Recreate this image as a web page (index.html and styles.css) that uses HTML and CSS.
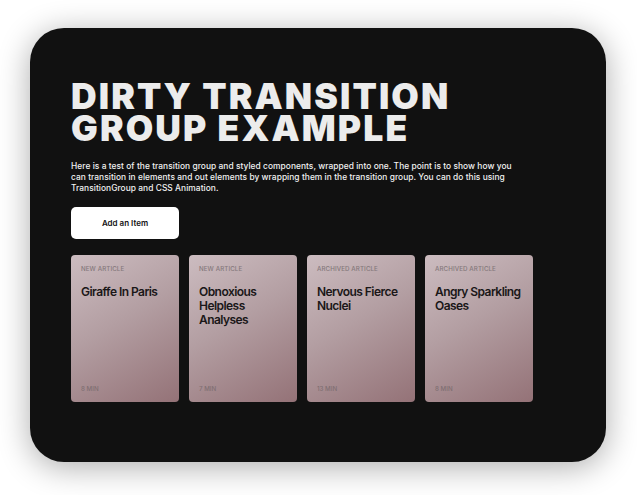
FILE: index.html
```html
<!DOCTYPE html>
<html>
<head>
<meta charset="utf-8">
<link rel="stylesheet" href="styles.css">
</head>
<body>
<main class="panel">
  <h1 class="title">DIRTY TRANSITION<br>GROUP EXAMPLE</h1>
  <p class="intro">Here is a test of the transition group and styled components, wrapped into one. The point is to show how you can transition in elements and out elements by wrapping them in the transition group. You can do this using TransitionGroup and CSS Animation.</p>
  <button class="add-btn">Add an Item</button>
  <section class="cards">
    <article class="card">
      <div class="card-label">New Article</div>
      <h2 class="card-title">Giraffe In Paris</h2>
      <div class="card-time">8 min</div>
    </article>
    <article class="card">
      <div class="card-label">New Article</div>
      <h2 class="card-title">Obnoxious Helpless Analyses</h2>
      <div class="card-time">7 min</div>
    </article>
    <article class="card">
      <div class="card-label">Archived Article</div>
      <h2 class="card-title">Nervous Fierce Nuclei</h2>
      <div class="card-time">13 min</div>
    </article>
    <article class="card">
      <div class="card-label">Archived Article</div>
      <h2 class="card-title">Angry Sparkling Oases</h2>
      <div class="card-time">8 min</div>
    </article>
  </section>
</main>
</body>
</html>
```
FILE: styles.css
```css
html, body {
  margin: 0;
  padding: 0;
  background: #ffffff;
}
body {
  padding: 28px 31px 33px 30px;
  font-family: Inter, "Liberation Sans", sans-serif;
}
.panel {
  box-sizing: border-box;
  width: 576px;
  height: 434px;
  background: #111111;
  border-radius: 34px;
  box-shadow: 0 5px 32px rgba(0, 0, 0, 0.33);
  padding: 53px 41px 0 41px;
}
.title {
  margin: 0;
  font-family: Inter, "Liberation Sans", sans-serif;
  font-weight: 900;
  font-size: 35.5px;
  line-height: 31.5px;
  color: #ececec;
  letter-spacing: 2.1px;
}
.intro {
  margin: 17px 0 0 0;
  width: 452px;
  font-size: 8.4px;
  line-height: 11px;
  color: #f2f2f2;
  font-weight: 500;
  letter-spacing: 0.05px;
}
.add-btn {
  display: block;
  margin-top: 13px;
  width: 108px;
  height: 32px;
  background: #ffffff;
  border: none;
  border-radius: 5px;
  font-family: Inter, "Liberation Sans", sans-serif;
  font-weight: 600;
  font-size: 8px;
  color: #111111;
  padding: 0;
}
.cards {
  display: flex;
  gap: 10px;
  margin-top: 16px;
}
.card {
  box-sizing: border-box;
  width: 108px;
  height: 147px;
  border-radius: 4px;
  background: linear-gradient(150deg, #ccbcc0 0%, #b39ea2 45%, #947277 100%);
  padding: 10px 10px 9px 10px;
  display: flex;
  flex-direction: column;
}
.card-label {
  font-size: 6.2px;
  font-weight: 500;
  text-transform: uppercase;
  color: #84787b;
  letter-spacing: 0.1px;
  line-height: 8px;
}
.card-title {
  margin: 12px 0 0 0;
  font-size: 12px;
  font-weight: 600;
  line-height: 14px;
  color: #1a1718;
  letter-spacing: -0.55px;
}
.card-time {
  margin-top: auto;
  font-size: 6.2px;
  font-weight: 500;
  text-transform: uppercase;
  color: #7f6f72;
  line-height: 8px;
}
```
